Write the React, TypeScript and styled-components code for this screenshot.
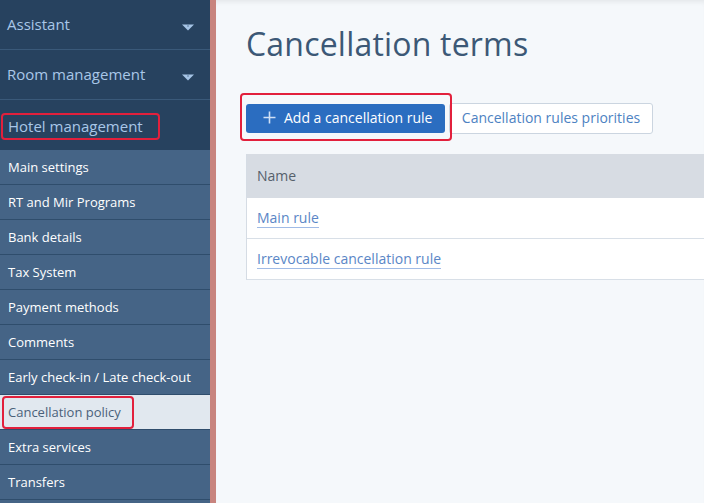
import styled, { createGlobalStyle } from "styled-components"

const GlobalStyle = createGlobalStyle`
  html, body {
    margin: 0;
    padding: 0;
    height: 100%;
    overflow: hidden;
    background: #f5f8fb;
    font-family: "Open Sans", "Liberation Sans", sans-serif;
  }
  #root {
    height: 100%;
  }
`

const topItems = [
  { label: "Assistant", arrow: true },
  { label: "Room management", arrow: true },
  { label: "Hotel management", arrow: false, marked: true },
]

const subItems = [
  "Main settings",
  "RT and Mir Programs",
  "Bank details",
  "Tax System",
  "Payment methods",
  "Comments",
  "Early check-in / Late check-out",
  "Cancellation policy",
  "Extra services",
  "Transfers",
]

const rules = ["Main rule", "Irrevocable cancellation rule"]

const Caret = () => (
  <CaretIcon width="12" height="7" viewBox="0 0 12 7">
    <path d="M0 0.5 H12 L6 6.5 Z" fill="#a6c4e6" />
    <rect x="5" y="1.5" width="2" height="1" fill="#5c7c9e" />
  </CaretIcon>
)

const PlusIcon = () => (
  <svg width="13" height="13" viewBox="0 0 13 13">
    <path d="M6.5 0.5 V12.5 M0.5 6.5 H12.5" stroke="#cfe0f5" strokeWidth="1.6" />
  </svg>
)

const App = () => {
  return (
    <>
      <GlobalStyle />
      <Page>
        <Sidebar>
          {topItems.map((item) => (
            <TopItem key={item.label} $last={item.marked}>
              {item.marked ? <Marked $inset="-3px -17px -4px -7px">{item.label}</Marked> : item.label}
              {item.arrow && <Caret />}
            </TopItem>
          ))}
          {subItems.map((label) => {
            const active = label === "Cancellation policy"
            return (
              <SubItem key={label} $active={active}>
                {active ? <Marked $inset="-7px -13px -8px -6px">{label}</Marked> : label}
              </SubItem>
            )
          })}
        </Sidebar>
        <Content>
          <Title>Cancellation terms</Title>
          <Actions>
            <Marked $inset="-11px -7px -8px -6px">
              <PrimaryButton>
                <PlusIcon />
                Add a cancellation rule
              </PrimaryButton>
            </Marked>
            <SecondaryButton>Cancellation rules priorities</SecondaryButton>
          </Actions>
          <Table>
            <HeaderRow>Name</HeaderRow>
            {rules.map((rule) => (
              <Row key={rule}>
                <RuleLink>{rule}</RuleLink>
              </Row>
            ))}
          </Table>
        </Content>
      </Page>
    </>
  )
}

const Page = styled.div`
  display: flex;
  height: 100%;
`

const Sidebar = styled.nav`
  width: 210px;
  flex-shrink: 0;
  background: #456486;
  border-right: 6px solid #c8847e;
  display: flex;
  flex-direction: column;
`

const TopItem = styled.div<{ $last?: boolean }>`
  height: 50px;
  box-sizing: border-box;
  border-bottom: ${(p) => (p.$last ? "none" : "1px solid #3a5979")};
  background: #27425f;
  color: #a9c7e8;
  font-size: 15px;
  line-height: 20px;
  display: flex;
  align-items: center;
  justify-content: space-between;
  padding: ${(p) => (p.$last ? "2px 16px 0 8px" : "0 16px 1px 7px")};
`

const CaretIcon = styled.svg`
  margin-top: 7px;
`

const SubItem = styled.div<{ $active?: boolean }>`
  height: 35px;
  box-sizing: border-box;
  border-bottom: 1px solid #2f4d6c;
  background: ${(p) => (p.$active ? "#e1e8ef" : "#456486")};
  color: ${(p) => (p.$active ? "#4a617a" : "#ffffff")};
  font-size: 13px;
  display: flex;
  align-items: center;
  padding: 0 0 1px 8px;
  white-space: nowrap;
`

const Marked = styled.span<{ $inset: string }>`
  position: relative;
  display: inline-block;

  &::after {
    content: "";
    position: absolute;
    inset: ${(p) => p.$inset};
    border: 2px solid #e2203c;
    border-radius: 4px;
    pointer-events: none;
  }
`

const Content = styled.main`
  flex: 1;
  min-width: 0;
  padding: 22px 0 0 30px;
  box-shadow: inset 0 5px 5px -3px rgba(0, 0, 0, 0.07);
  overflow: hidden;
`

const Title = styled.h1`
  margin: 0;
  font-size: 32px;
  font-weight: 400;
  line-height: 44px;
  color: #3c5876;
  letter-spacing: 0.2px;
`

const Actions = styled.div`
  display: flex;
  align-items: center;
  gap: 4px;
  margin-top: 37px;
`

const PrimaryButton = styled.button`
  display: flex;
  align-items: center;
  gap: 8px;
  height: 29px;
  width: 199px;
  padding: 0 0 2px 17px;
  border: none;
  border-radius: 3px;
  background: #2b6dc0;
  color: #ffffff;
  font-family: inherit;
  font-size: 14px;
`

const SecondaryButton = styled.button`
  height: 31px;
  width: 204px;
  padding: 0 0 2px;
  border: 1px solid #cbd5e0;
  border-radius: 3px;
  background: #ffffff;
  color: #4d82c2;
  font-family: inherit;
  font-size: 14px;
`

const Table = styled.div`
  margin-top: 20px;
  width: 700px;
  border-left: 1px solid #d5dce4;
  background: #ffffff;
`

const HeaderRow = styled.div`
  height: 44px;
  background: #d7dce3;
  color: #56606b;
  font-size: 14px;
  display: flex;
  align-items: center;
  padding: 0 0 1px 10px;
  box-sizing: border-box;
`

const Row = styled.div`
  height: 41px;
  box-sizing: border-box;
  border-bottom: 1px solid #d8dfe7;
  display: flex;
  align-items: center;
  padding: 1px 0 0 10px;
`

const RuleLink = styled.a`
  color: #5a86c6;
  font-size: 14px;
  line-height: 18px;
  text-decoration: none;
  border-bottom: 1px solid #a0bbe6;
  cursor: pointer;
`

export default App
